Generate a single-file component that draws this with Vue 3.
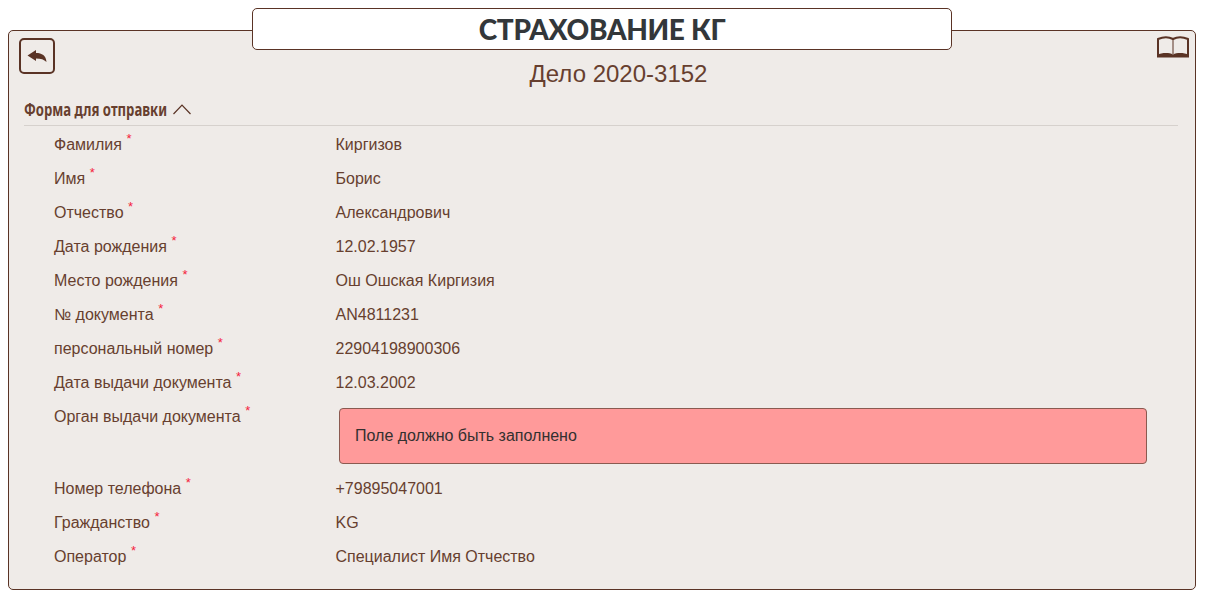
<template>
  <div class="page">
    <header class="brand">
      <span>СТРАХОВАНИЕ КГ</span>
    </header>
    <main class="card">
      <div class="toolbar">
        <button class="back" type="button" aria-label="Назад">
          <svg width="20" height="12" viewBox="0 0 20 12">
            <path d="M0.500 5.500 9 0V3C15 3 19 5.500 19.500 12 17 9.500 14 8.500 9 8.500V11Z" fill="#5a3325" />
          </svg>
        </button>
        <svg class="book" width="34" height="22" viewBox="0 0 34 22">
          <path d="M2 3C7 0.800 13 0.800 17 3 21 0.800 27 0.800 32 3V20H2Z" fill="none" stroke="#5a3325" stroke-width="2" stroke-linejoin="round" />
          <path d="M17 3V18" fill="none" stroke="#5a3325" stroke-width="1" />
          <path d="M1 21.500V19C6 16.500 13 16.500 17 18.500 21 16.500 28 16.500 33 19V21.500Z" fill="#5a3325" />
        </svg>
      </div>
      <h1 class="case-title">Дело 2020-3152</h1>
      <div class="section-head">
        <span class="section-name">Форма для отправки</span>
        <svg width="20" height="12" viewBox="0 0 20 12">
          <path d="M1.500 11 10 2 18.500 11" fill="none" stroke="#5a3325" stroke-width="1.200" />
        </svg>
      </div>
      <div class="fields">
        <div v-for="field in fields" :key="field.label" class="row">
          <div class="label">{{ field.label }}<sup class="req">*</sup></div>
          <div v-if="field.error" class="error">{{ field.error }}</div>
          <div v-else class="value">{{ field.value }}</div>
        </div>
      </div>
    </main>
  </div>
</template>

<script setup>
const fields = [
  { label: 'Фамилия', value: 'Киргизов' },
  { label: 'Имя', value: 'Борис' },
  { label: 'Отчество', value: 'Александрович' },
  { label: 'Дата рождения', value: '12.02.1957' },
  { label: 'Место рождения', value: 'Ош Ошская Киргизия' },
  { label: '№ документа', value: 'AN4811231' },
  { label: 'персональный номер', value: '22904198900306' },
  { label: 'Дата выдачи документа', value: '12.03.2002' },
  { label: 'Орган выдачи документа', error: 'Поле должно быть заполнено' },
  { label: 'Номер телефона', value: '+79895047001' },
  { label: 'Гражданство', value: 'KG' },
  { label: 'Оператор', value: 'Специалист Имя Отчество' }
]
</script>

<style>
html, body {
  margin: 0;
  background: #fff;
}
</style>

<style scoped>
.page {
  padding: 8px 20px 0 8px;
  font-family: "Liberation Sans", Arial, sans-serif;
  font-size: 16px;
  color: #673f2f;
}

.brand {
  position: relative;
  z-index: 1;
  box-sizing: border-box;
  width: 700px;
  height: 42px;
  margin: 0 0 -20px 244px;
  display: flex;
  align-items: center;
  justify-content: center;
  background: #fff;
  border: 1px solid #5a3325;
  border-radius: 5px;
  font-family: Lato, "Open Sans", sans-serif;
  font-weight: 900;
  font-size: 28px;
  letter-spacing: -0.3px;
  color: #33373a;
}

.card {
  box-sizing: border-box;
  width: 1188px;
  height: 560px;
  padding: 7px 17px 0 10px;
  background: #efebe8;
  border: 1px solid #5a3325;
  border-radius: 5px;
}

.toolbar {
  display: flex;
  justify-content: space-between;
  align-items: flex-start;
  height: 36px;
}

.back {
  box-sizing: border-box;
  width: 36px;
  height: 36px;
  padding: 0;
  display: flex;
  align-items: center;
  justify-content: center;
  background: transparent;
  border: 2px solid #5a3325;
  border-radius: 5px;
}

.book {
  margin: -2px -12px 0 0;
}

.case-title {
  margin: -20px 0 0;
  padding-left: 40px;
  height: 39px;
  line-height: 39px;
  text-align: center;
  font-size: 24px;
  font-weight: 400;
}

.section-head {
  display: flex;
  align-items: center;
  gap: 5px;
  height: 32px;
  margin-left: 5px;
  border-bottom: 1px solid #d6d1cd;
  font-family: "Noto Sans", "Liberation Sans", sans-serif;
  font-weight: 700;
  font-size: 18px;
}

.section-name {
  display: inline-block;
  width: 143px;
  white-space: nowrap;
  transform: scaleX(0.73);
  transform-origin: left center;
}

.fields {
  padding: 1px 0 0 35px;
}

.row {
  display: flex;
  min-height: 34px;
}

.label {
  width: 281.500px;
  height: 34px;
  line-height: 36px;
  flex: none;
}

.req {
  margin-left: 4.500px;
  color: #f5223c;
  font-size: 13px;
  line-height: 0;
  vertical-align: 7px;
}

.value {
  height: 34px;
  line-height: 36px;
}

.error {
  box-sizing: border-box;
  width: 808px;
  height: 56px;
  margin: 9px 0 7px 3.500px;
  padding: 0 15px;
  display: flex;
  align-items: center;
  background: #ff9a9a;
  border: 1px solid #8a5a50;
  border-radius: 4px;
  color: #33302f;
}
</style>
